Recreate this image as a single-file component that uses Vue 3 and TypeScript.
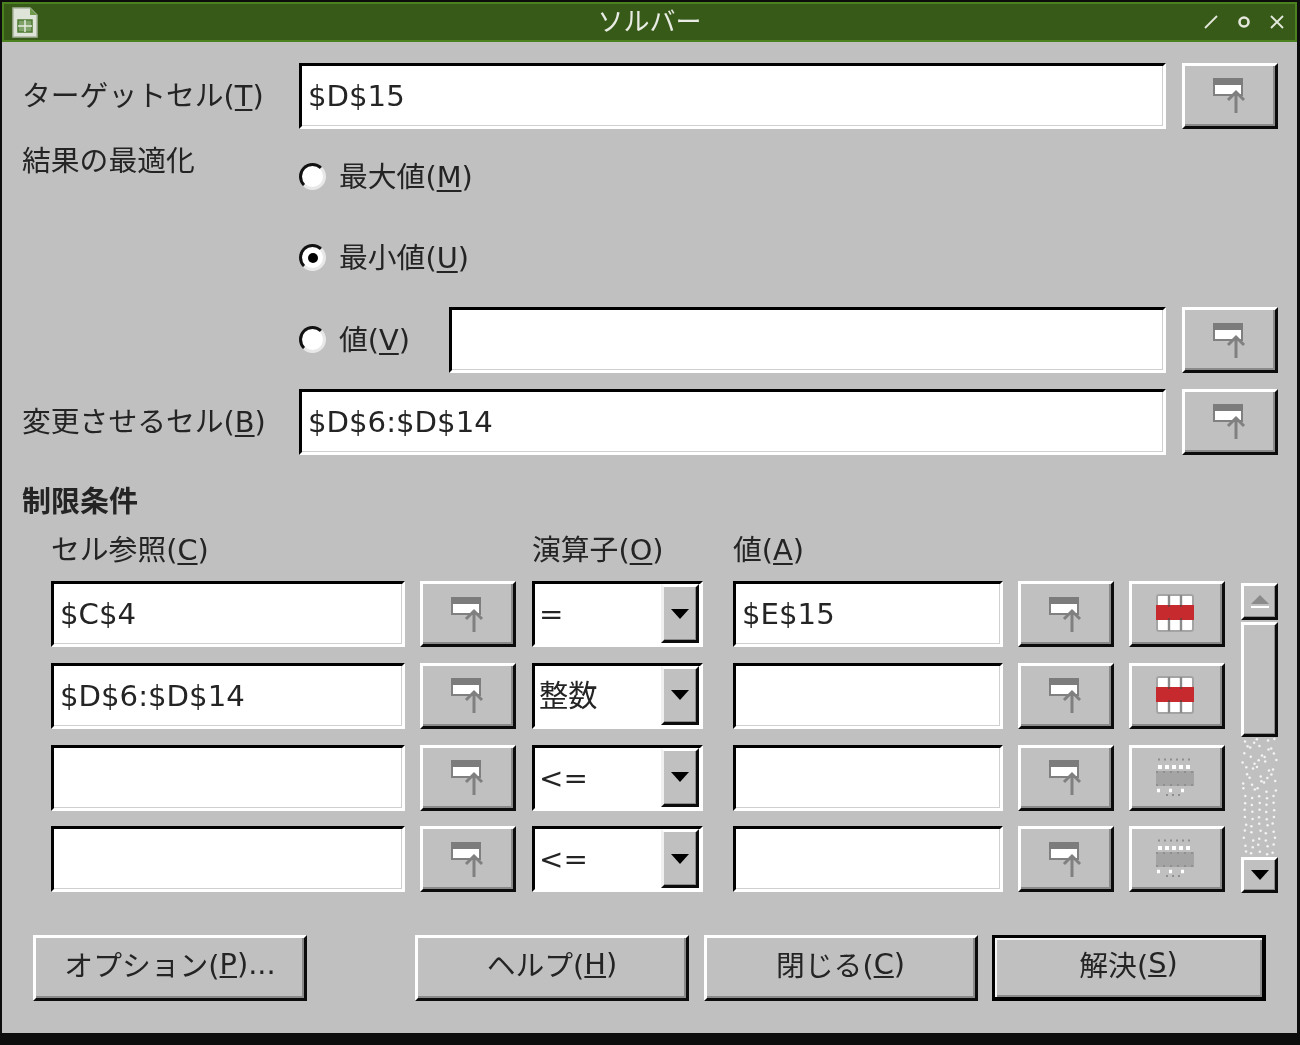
<script setup lang="ts">
interface Constraint {
  cell: string
  op: string
  value: string
  enabled: boolean
}

const constraints: Constraint[] = [
  { cell: '$C$4', op: '=', value: '$E$15', enabled: true },
  { cell: '$D$6:$D$14', op: '整数', value: '', enabled: true },
  { cell: '', op: '<=', value: '', enabled: false },
  { cell: '', op: '<=', value: '', enabled: false },
]

// Scrollbar trough stipple: regular grid at the bottom, wavier towards the top.
const dots: { x: number; y: number }[] = []
for (let r = 0; r < 17; r++) {
  for (let c = 0; c < 5; c++) {
    const amp = r < 8 ? 2.6 : r > 11 ? 1.2 : 0.4
    const x = 4 + c * 7.2 + Math.sin(r * 1.7 + c * 2.3) * amp
    const y = 3 + r * 7 + (c % 2) * 2 + Math.cos(r * 2.1 + c) * amp * 0.6
    dots.push({ x, y })
  }
}
</script>

<template>
  <svg class="defs" aria-hidden="true">
    <symbol id="ref" viewBox="0 0 33 35">
      <rect x="1" y="1" width="28" height="16" fill="#fff" stroke="#808080" stroke-width="2" />
      <rect x="0" y="0" width="30" height="7" fill="#7c7c7c" />
      <path d="M23 35V14M15 22l8-8 8 8" fill="none" stroke="#808080" stroke-width="3" />
    </symbol>
    <symbol id="del" viewBox="0 0 38 38">
      <rect x="1" y="1" width="36" height="36" rx="2" fill="#fff" stroke="#a4a4a4" stroke-width="2" />
      <path d="M13 1v36M25 1v36" stroke="#8a8a8a" stroke-width="2.4" />
      <rect x="0" y="11" width="38" height="15" fill="#c62a2e" />
      <path d="M13 11v2M25 11v2M13 24v2M25 24v2" stroke="#7a3a3a" stroke-width="2" />
    </symbol>
    <symbol id="del-off" viewBox="0 0 40 38">
      <path d="M3 1.5H37" stroke="#8e8e8e" stroke-width="2" stroke-dasharray="2 4" />
      <path d="M3 9H37" stroke="#fff" stroke-width="4" stroke-dasharray="4 3" />
      <rect x="1" y="13" width="38" height="15" fill="#a4a4a4" />
      <path d="M1 14H39M1 27H39" stroke="#888" stroke-width="1.5" stroke-dasharray="2 5" />
      <path d="M2 32.500H38" stroke="#fff" stroke-width="3.500" stroke-dasharray="3 9" />
      <path d="M11 37H29" stroke="#8e8e8e" stroke-width="2" stroke-dasharray="2 4" />
    </symbol>
  </svg>

  <div class="window">
    <header class="titlebar">
      <div class="title-left">
        <svg class="app-icon" viewBox="0 0 26 31" aria-hidden="true">
          <path d="M1 1H18L25 8V30H1Z" fill="#dfe4d8" stroke="#a9b49d" stroke-width="1.500" />
          <path d="M18 1V8H25Z" fill="#6f9a4b" />
          <rect x="6" y="13" width="14" height="12" fill="#7fa268" stroke="#4d7a32" stroke-width="1.500" />
          <path d="M13 13V25M6 19H20" stroke="#e6ebe0" stroke-width="1.500" />
        </svg>
      </div>
      <div class="title-text">ソルバー</div>
      <div class="title-controls">
        <svg viewBox="0 0 14 14" aria-hidden="true"><path d="M1 13L13 1" /></svg>
        <svg viewBox="0 0 14 14" aria-hidden="true"><circle cx="7" cy="7" r="4.500" stroke-width="2.600" /></svg>
        <svg viewBox="0 0 14 14" aria-hidden="true"><path d="M1 1L13 13M13 1L1 13" /></svg>
      </div>
    </header>

    <main class="body">
      <section class="top-grid">
        <div class="label center">ターゲットセル(<u>T</u>)</div>
        <div class="field">$D$15</div>
        <button class="btn ref-btn"><svg class="ref-icon"><use href="#ref" /></svg></button>

        <div class="label opt-label">結果の最適化</div>
        <div class="radio-row wide">
          <span class="radio"></span><span class="label">最大値(<u>M</u>)</span>
        </div>

        <div class="wide radio-row start-2">
          <span class="radio on"></span><span class="label">最小値(<u>U</u>)</span>
        </div>

        <div class="value-line start-2">
          <div class="radio-row value-radio">
            <span class="radio"></span><span class="label">値(<u>V</u>)</span>
          </div>
          <div class="field grow"></div>
        </div>
        <button class="btn ref-btn"><svg class="ref-icon"><use href="#ref" /></svg></button>

        <div class="label center">変更させるセル(<u>B</u>)</div>
        <div class="field">$D$6:$D$14</div>
        <button class="btn ref-btn"><svg class="ref-icon"><use href="#ref" /></svg></button>
      </section>

      <h2 class="section-title">制限条件</h2>

      <section class="constraints">
        <div class="table">
          <div class="label head">セル参照(<u>C</u>)</div>
          <div class="head-spacer"></div>
          <div class="label head combo-col">演算子(<u>O</u>)</div>
          <div class="label head value-col">値(<u>A</u>)</div>
          <div class="head-spacer"></div>
          <div class="head-spacer"></div>

          <template v-for="(row, i) in constraints" :key="i">
            <div class="field">{{ row.cell }}</div>
            <button class="btn ref-btn"><svg class="ref-icon"><use href="#ref" /></svg></button>
            <div class="combo combo-col">
              <span class="combo-text">{{ row.op }}</span>
              <span class="combo-btn"><i class="tri down"></i></span>
            </div>
            <div class="field value-col">{{ row.value }}</div>
            <button class="btn ref-btn"><svg class="ref-icon"><use href="#ref" /></svg></button>
            <button class="btn del-btn">
              <svg v-if="row.enabled" class="del-icon"><use href="#del" /></svg>
              <svg v-else class="del-off-icon"><use href="#del-off" /></svg>
            </button>
          </template>
        </div>

        <div class="scrollbar">
          <div class="sb-btn up"><i class="tri up-tri"></i></div>
          <div class="sb-thumb"></div>
          <svg class="sb-trough" viewBox="0 0 37 120" aria-hidden="true">
            <circle v-for="(d, i) in dots" :key="i" :cx="d.x" :cy="d.y" r="1.250" fill="#f4f4f4" />
          </svg>
          <div class="sb-btn down"><i class="tri down"></i></div>
        </div>
      </section>

      <footer class="actions">
        <button class="btn action">オプション(<u>P</u>)...</button>
        <div class="actions-right">
          <button class="btn action">ヘルプ(<u>H</u>)</button>
          <button class="btn action">閉じる(<u>C</u>)</button>
          <button class="btn action default">解決(<u>S</u>)</button>
        </div>
      </footer>
    </main>
  </div>
</template>

<style scoped>
.defs {
  position: absolute;
  width: 0;
  height: 0;
}
.window {
  width: 1300px;
  height: 1045px;
  box-sizing: border-box;
  background: #0d0d0d;
  font-family: "DejaVu Sans", "Noto Sans CJK JP", sans-serif;
  font-size: 29.200px;
  color: #242424;
  overflow: hidden;
  filter: blur(0.75px);
}
.titlebar {
  box-sizing: border-box;
  height: 40px;
  margin: 2px 3px 0 2px;
  background: #375a18;
  border: 2px solid #4c8120;
  display: grid;
  grid-template-columns: 1fr auto 1fr;
  align-items: center;
  color: #e9ece4;
}
.title-left {
  display: flex;
  align-items: center;
  padding-left: 8px;
}
.app-icon {
  width: 26px;
  height: 31px;
  display: block;
}
.title-text {
  font-size: 26px;
  line-height: 36px;
}
.title-controls {
  display: flex;
  justify-content: flex-end;
  align-items: center;
  gap: 19px;
  padding-right: 11px;
}
.title-controls svg {
  width: 14px;
  height: 14px;
  fill: none;
  stroke: #e4e8dc;
  stroke-width: 1.800;
}
.body {
  box-sizing: border-box;
  height: 991px;
  margin: 0 3px 0 2px;
  padding: 20.500px 20px 0 20px;
  background: #c0c0c0;
}
.top-grid {
  display: grid;
  grid-template-columns: 277px 867px 112px;
  grid-auto-rows: 66px;
  row-gap: 15.600px;
}
.top-grid > .ref-btn {
  margin-left: 16px;
  width: 96px;
}
.start-2 {
  grid-column: 2;
}
.wide {
  grid-column: 2 / 4;
}
.label {
  font-size: 28.800px;
  line-height: 33px;
  white-space: nowrap;
}
.label u {
  text-underline-offset: 3px;
  text-decoration-thickness: 2px;
}
.center {
  align-self: center;
  margin-top: 2px;
}
.opt-label {
  grid-row: 2;
  grid-column: 1;
  align-self: start;
  margin-top: 1px;
}
.field {
  box-sizing: border-box;
  height: 66px;
  background: #fff;
  border: 3px solid;
  border-color: #000 #fff #fff #000;
  box-shadow: inset -1px -1px #cfcfcf;
  padding: 0 6px;
  line-height: 60px;
  white-space: nowrap;
  overflow: hidden;
}
.grow {
  flex: 1;
}
.btn {
  box-sizing: border-box;
  width: 100%;
  height: 66px;
  margin: 0;
  padding: 0;
  background: #c0c0c0;
  border: 3px solid;
  border-color: #fff #0c0c0c #0c0c0c #fff;
  box-shadow: inset -2px -2px #8a8a8a;
  display: flex;
  align-items: center;
  justify-content: center;
  font: inherit;
  color: inherit;
}
.ref-btn {
  padding-right: 2px;
}
.del-btn {
  padding: 0 4px 2px 0;
}
.ref-icon {
  width: 33px;
  height: 35px;
}
.del-icon {
  width: 38px;
  height: 38px;
}
.del-off-icon {
  width: 40px;
  height: 38px;
}
.radio-row {
  display: flex;
  align-items: center;
  gap: 13px;
}
.radio {
  box-sizing: border-box;
  flex: none;
  width: 27px;
  height: 27px;
  margin-bottom: 2px;
  border-radius: 50%;
  background: #fff;
  border: 3px solid;
  border-color: #111 #e8e8e8 #e8e8e8 #111;
  display: flex;
  align-items: center;
  justify-content: center;
}
.radio.on::after {
  content: "";
  width: 10px;
  height: 10px;
  border-radius: 50%;
  background: #000;
}
.value-line {
  display: flex;
  align-items: center;
}
.value-radio {
  width: 150px;
  flex: none;
}
.section-title {
  margin: 31.500px 0 0;
  font-size: 29px;
  line-height: 33px;
  font-weight: 700;
}
.constraints {
  display: flex;
  margin-top: 15px;
  padding-left: 29px;
  gap: 16px;
}
.table {
  display: grid;
  grid-template-columns: 354px 96px 172px 285px 96px 96px;
  grid-template-rows: 30.800px repeat(4, 65.700px);
  column-gap: 15px;
  row-gap: 16px;
}
.combo-col {
  margin-left: 1px;
}
.value-col {
  margin-left: 15px;
}
.combo {
  box-sizing: border-box;
  height: 66px;
  background: #fff;
  border: 3px solid;
  border-color: #000 #fff #fff #000;
  display: flex;
  align-items: stretch;
  padding: 0 1px 1px 0;
}
.combo-text {
  flex: 1;
  padding-left: 4px;
  line-height: 60px;
  white-space: nowrap;
}
.combo-btn {
  box-sizing: border-box;
  width: 38px;
  background: #c0c0c0;
  border: 3px solid;
  border-color: #fff #0c0c0c #0c0c0c #f0f0f0;
  box-shadow: inset -1px -1px #8a8a8a;
  display: flex;
  align-items: center;
  justify-content: center;
}
.tri {
  display: block;
  width: 0;
  height: 0;
  border-left: 9px solid transparent;
  border-right: 9px solid transparent;
}
.tri.down {
  border-top: 10px solid #000;
}
.tri.up-tri {
  border-bottom: 9px solid #8a8a8a;
}
.scrollbar {
  width: 37px;
  margin-top: 48.600px;
  display: flex;
  flex-direction: column;
  height: 310px;
}
.sb-btn,
.sb-thumb {
  box-sizing: border-box;
  background: #c0c0c0;
  border: 3px solid;
  border-color: #fff #0c0c0c #0c0c0c #fff;
  box-shadow: inset -1px -1px #8a8a8a;
  display: flex;
  align-items: center;
  justify-content: center;
}
.sb-btn.up {
  height: 37px;
  flex: none;
  flex-direction: column;
}
.sb-btn.up::after {
  content: "";
  width: 18px;
  height: 2px;
  margin-top: 2px;
  background: #fff;
}
.sb-thumb {
  height: 115px;
  flex: none;
  margin-top: 2px;
}
.sb-trough {
  flex: 1;
  width: 37px;
  min-height: 0;
  display: block;
}
.sb-btn.down {
  height: 36px;
  flex: none;
}
.actions {
  display: flex;
  justify-content: space-between;
  margin-top: 42px;
  padding: 0 11px 0 11px;
}
.actions-right {
  display: flex;
  gap: 14.500px;
}
.action {
  width: 274px;
  height: 66px;
  padding-bottom: 8px;
  font-size: 28.800px;
}
.default {
  border-width: 3px 4px 4px 3px;
  border-color: #000;
  box-shadow: inset 2px 2px #f4f4f4, inset -2px -2px #8a8a8a;
}
</style>

<style>
html,
body {
  margin: 0;
  background: #0d0d0d;
  overflow: hidden;
}
</style>
